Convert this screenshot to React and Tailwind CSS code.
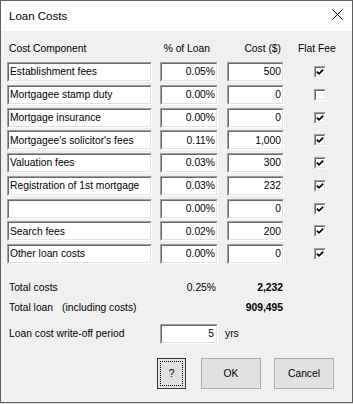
import React from "react";

const rows = [
  { name: "Establishment fees", pct: "0.05%", cost: "500", flat: true },
  { name: "Mortgagee stamp duty", pct: "0.00%", cost: "0", flat: false },
  { name: "Mortgage insurance", pct: "0.00%", cost: "0", flat: true },
  { name: "Mortgagee's solicitor's fees", pct: "0.11%", cost: "1,000", flat: true },
  { name: "Valuation fees", pct: "0.03%", cost: "300", flat: true },
  { name: "Registration of 1st mortgage", pct: "0.03%", cost: "232", flat: true },
  { name: "", pct: "0.00%", cost: "0", flat: true },
  { name: "Search fees", pct: "0.02%", cost: "200", flat: true },
  { name: "Other loan costs", pct: "0.00%", cost: "0", flat: true },
];

function Field({ w, align = "left", children }) {
  return (
    <div
      className={`${w} h-[20px] shrink-0 border-t border-l border-t-[#a0a0a0] border-l-[#a0a0a0] border-b border-r border-b-white border-r-white`}
    >
      <div
        className={`h-full bg-white border-t border-l border-t-[#696969] border-l-[#696969] border-b border-r border-b-[#e3e3e3] border-r-[#e3e3e3] flex items-center whitespace-nowrap overflow-hidden ${
          align === "right" ? "justify-end pr-[1px]" : "pl-[1px]"
        }`}
      >
        {children}
      </div>
    </div>
  );
}

function Check({ checked }) {
  return (
    <div className="w-[12px] h-[12px] border-t border-l border-t-[#a0a0a0] border-l-[#a0a0a0] border-b border-r border-b-white border-r-white">
      <div className="w-full h-full bg-white border-t border-l border-t-[#696969] border-l-[#696969] border-b border-r border-b-[#e3e3e3] border-r-[#e3e3e3] flex items-center justify-center">
        {checked && (
          <svg width="8" height="8" viewBox="0 0 8 8">
            <path d="M0.8 3.6 L3 5.8 L7.2 1.6" fill="none" stroke="#000" strokeWidth="1.7" />
          </svg>
        )}
      </div>
    </div>
  );
}

export default function App() {
  return (
    <div className="w-[353px] h-[404px] bg-[#dcdcdc] overflow-hidden font-['Liberation_Sans',Arial,sans-serif] text-[10.3px] text-black">
      <div className="w-[353px] h-[403px] border border-[#5f5f5f] flex flex-col">
        <div className="h-[30px] bg-white flex items-center justify-between pl-[8px] pr-[9px] shrink-0">
          <span className="text-[11.5px] mt-[1px]">Loan Costs</span>
          <svg width="11" height="11" viewBox="0 0 11 11" className="mb-[3px]">
            <path d="M0.5 0.5 L10.5 10.5 M10.5 0.5 L0.5 10.5" stroke="#000" strokeWidth="1" />
          </svg>
        </div>
        <div className="flex-1 bg-[#f0f0f0] pl-[6px] flex flex-col">
          <div className="flex items-center h-[14px] mt-[11px] mb-[6px]">
            <div className="w-[145px] pl-[2px]">Cost Component</div>
            <div className="w-[58px] ml-[8px] text-right pr-[8px]">% of Loan</div>
            <div className="w-[57px] ml-[9px] text-right pr-[3px]">Cost ($)</div>
            <div className="ml-[14px]">Flat Fee</div>
          </div>
          <div className="flex flex-col gap-[2.75px]">
            {rows.map((r, i) => (
              <div key={i} className="flex items-center">
                <Field w="w-[145px]">{r.name}</Field>
                <div className="ml-[8px]">
                  <Field w="w-[58px]" align="right">{r.pct}</Field>
                </div>
                <div className="ml-[9px]">
                  <Field w="w-[57px]" align="right">{r.cost}</Field>
                </div>
                <div className="ml-[30px]">
                  <Check checked={r.flat} />
                </div>
              </div>
            ))}
          </div>
          <div className="flex items-center h-[14px] mt-[17px]">
            <div className="w-[145px] pl-[2px]">Total costs</div>
            <div className="w-[58px] ml-[8px] text-right pr-[2px]">0.25%</div>
            <div className="w-[57px] ml-[9px] text-right pr-[1px] font-bold">2,232</div>
          </div>
          <div className="flex items-center h-[14px] mt-[6px]">
            <div className="w-[145px] pl-[2px] whitespace-nowrap">
              Total loan<span className="ml-[9px]">(including costs)</span>
            </div>
            <div className="w-[58px] ml-[8px]"></div>
            <div className="w-[57px] ml-[9px] text-right pr-[1px] font-bold">909,495</div>
          </div>
          <div className="flex items-center mt-[9px]">
            <div className="w-[145px] pl-[2px]">Loan cost write-off period</div>
            <div className="ml-[8px]">
              <Field w="w-[58px]" align="right">
                <span className="pr-[1px]">5</span>
              </Field>
            </div>
            <div className="ml-[7px]">yrs</div>
          </div>
          <div className="flex items-center mt-[14px] pl-[150px]">
            <div className="w-[29px] h-[31px] border border-[#333] bg-[#e1e1e1] p-[2px]">
              <div className="w-full h-full border border-dotted border-black flex items-center justify-center">
                ?
              </div>
            </div>
            <div className="w-[60px] h-[31px] ml-[15px] border border-[#adadad] bg-[#e1e1e1] flex items-center justify-center">
              OK
            </div>
            <div className="w-[60px] h-[31px] ml-[13px] border border-[#adadad] bg-[#e1e1e1] flex items-center justify-center">
              Cancel
            </div>
          </div>
        </div>
      </div>
    </div>
  );
}
